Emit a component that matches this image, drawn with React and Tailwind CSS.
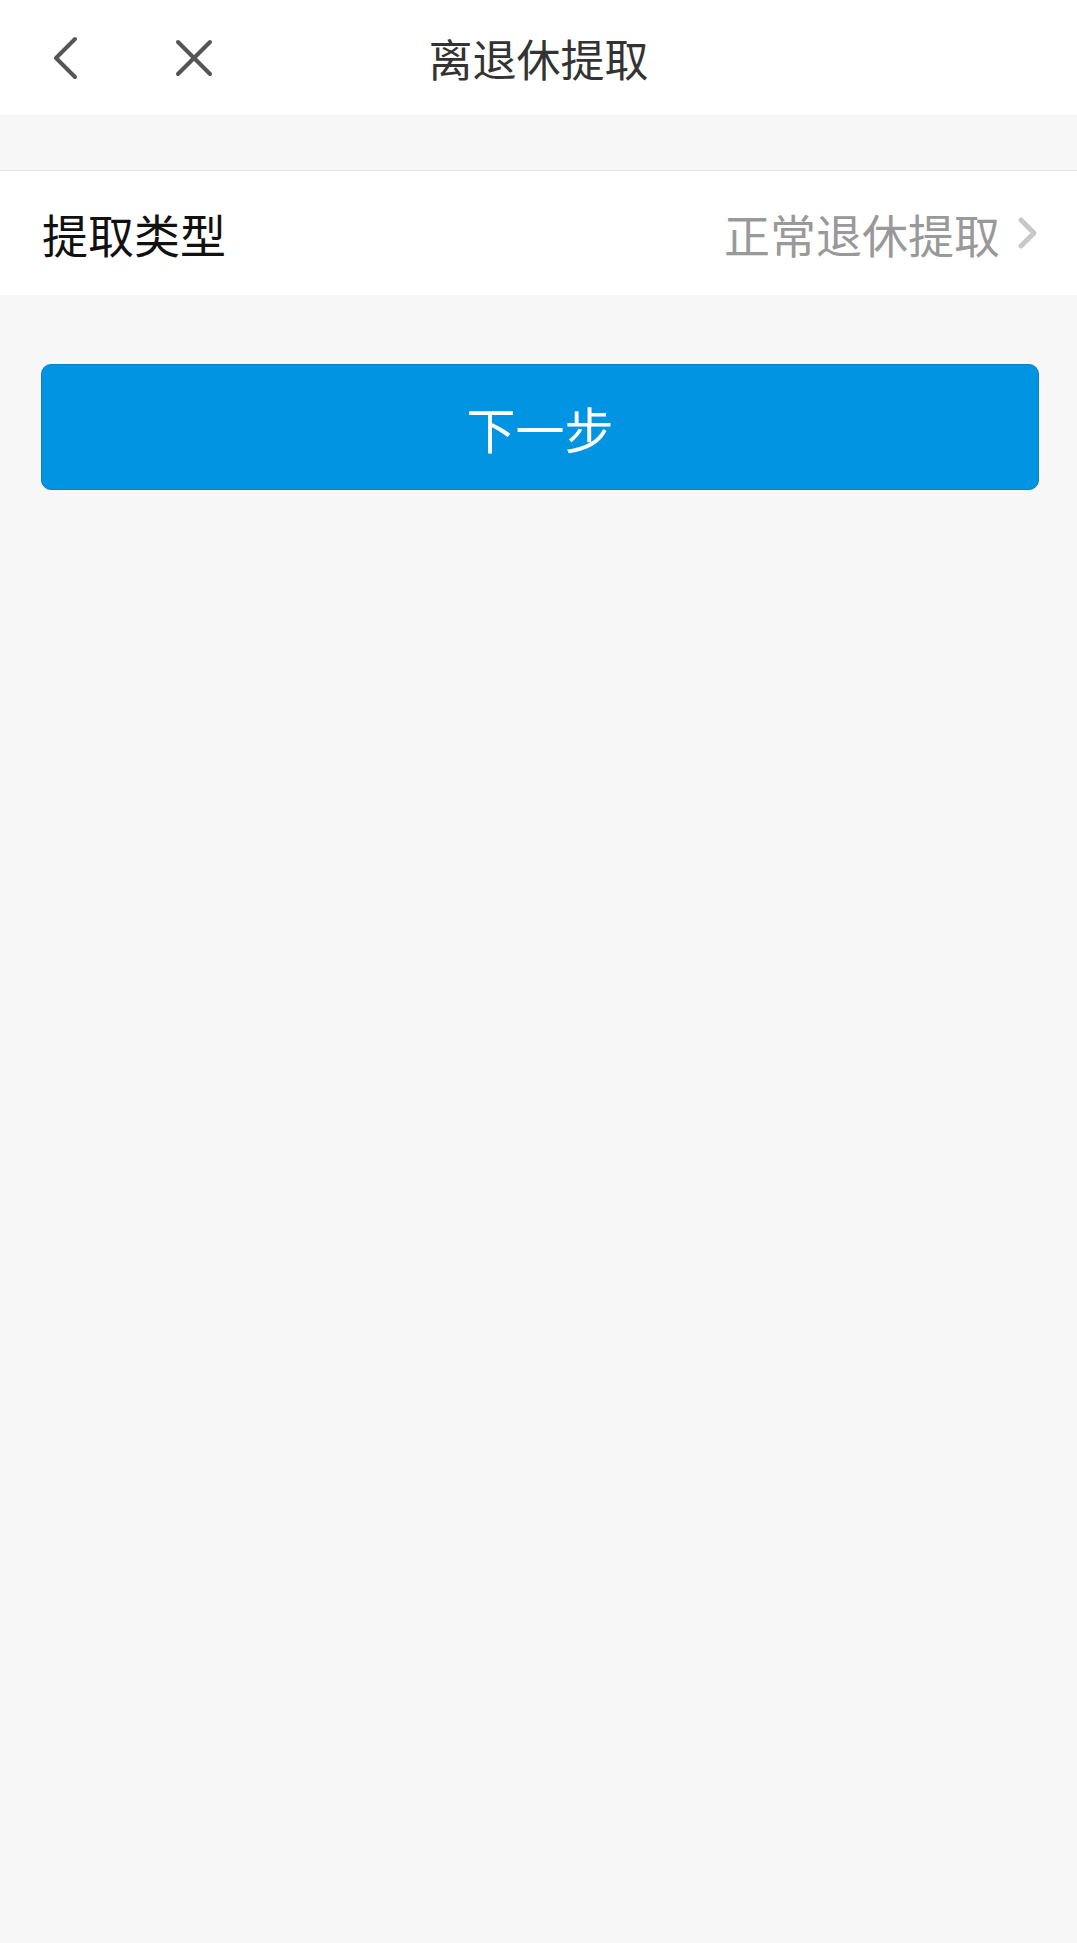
export default function App() {
    return (
        <div className="min-h-[1943px] bg-[#f7f7f7] font-['Noto_Sans_CJK_SC',sans-serif]">
            {/* Header */}
            <div className="grid h-[115px] grid-cols-[1fr_auto_1fr] items-center bg-white">
                <div className="flex items-center pl-[52px]">
                    <button className="flex items-center text-[#555]">
                        <svg width="26" height="44" viewBox="0 0 26 44" fill="none" stroke="currentColor" strokeWidth="4" strokeLinecap="round" strokeLinejoin="round">
                            <polyline points="23,3 4,22 23,41" />
                        </svg>
                    </button>
                    <button className="ml-[97px] flex items-center text-[#555]">
                        <svg width="38" height="38" viewBox="0 0 38 38" fill="none" stroke="currentColor" strokeWidth="4" strokeLinecap="round">
                            <line x1="3" y1="3" x2="35" y2="35" />
                            <line x1="35" y1="3" x2="3" y2="35" />
                        </svg>
                    </button>
                </div>
                <h1 className="text-[44px] leading-none text-[#333]">离退休提取</h1>
                <div />
            </div>

            {/* Spacer */}
            <div className="h-[56px] border-b border-[#e3e3e3]" />

            {/* Row */}
            <div className="flex h-[124px] items-center justify-between bg-white pl-[42px] pr-[38px]">
                <span className="text-[46px] leading-none text-[#111]">提取类型</span>
                <div className="flex items-center gap-[17px]">
                    <span className="text-[46px] leading-none text-[#999]">正常退休提取</span>
                    <svg width="22" height="34" viewBox="0 0 22 34" fill="none" stroke="#c8c8c8" strokeWidth="5" strokeLinecap="round" strokeLinejoin="round">
                        <polyline points="4,4 17,17 4,30" />
                    </svg>
                </div>
            </div>

            {/* Button */}
            <div className="pl-[41px] pr-[38px] pt-[69px]">
                <button className="flex h-[126px] w-full items-center justify-center rounded-[10px] border border-[#0b7fc2] bg-[#0094e3] text-[49px] leading-none text-white">
                    下一步
                </button>
            </div>
        </div>
    );
}
